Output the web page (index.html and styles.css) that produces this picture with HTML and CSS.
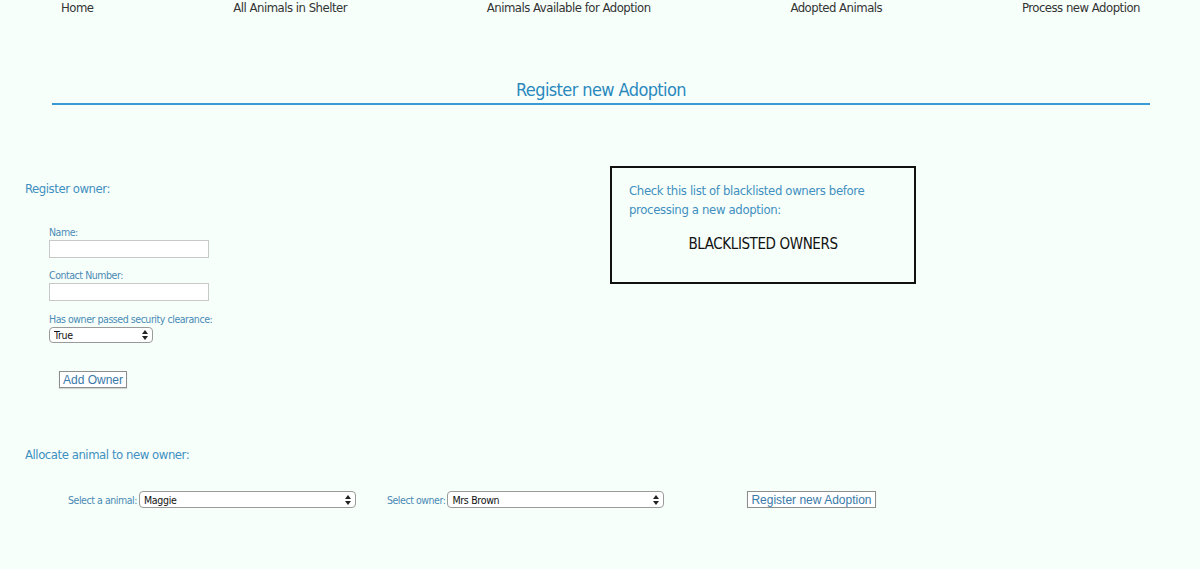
FILE: index.html
```html
<!DOCTYPE html>
<html lang="en">
<head>
<meta charset="utf-8">
<title>Register new Adoption</title>
<link rel="stylesheet" href="styles.css">
</head>
<body>
<nav class="nav">
  <a href="#">Home</a>
  <a href="#">All Animals in Shelter</a>
  <a href="#">Animals Available for Adoption</a>
  <a href="#">Adopted Animals</a>
  <a href="#">Process new Adoption</a>
</nav>
<header class="title">
  <h1>Register new Adoption</h1>
</header>
<main class="top">
  <section class="owner">
    <h2>Register owner:</h2>
    <form class="owner-form">
      <label class="field">
        <span>Name:</span>
        <input type="text" class="text-in">
      </label>
      <label class="field">
        <span>Contact Number:</span>
        <input type="text" class="text-in">
      </label>
      <label class="field field-last">
        <span>Has owner passed security clearance:</span>
        <span class="sel sel-small">
          <select><option>True</option><option>False</option></select>
          <svg class="arrows" width="6" height="10" viewBox="0 0 6 10"><path d="M3 0L6 4H0z M3 10L0 6H6z" fill="#222"/></svg>
        </span>
      </label>
      <button type="button" class="btn add-btn">Add Owner</button>
    </form>
  </section>
  <aside class="blacklist">
    <p>Check this list of blacklisted owners before processing a new adoption:</p>
    <h3>BLACKLISTED OWNERS</h3>
  </aside>
</main>
<section class="allocate">
  <h2>Allocate animal to new owner:</h2>
  <div class="alloc-row">
    <label class="inline">Select a animal:
      <span class="sel sel-wide">
        <select><option>Maggie</option></select>
        <svg class="arrows" width="6" height="10" viewBox="0 0 6 10"><path d="M3 0L6 4H0z M3 10L0 6H6z" fill="#222"/></svg>
      </span>
    </label>
    <label class="inline">Select owner:
      <span class="sel sel-wide">
        <select><option>Mrs Brown</option></select>
        <svg class="arrows" width="6" height="10" viewBox="0 0 6 10"><path d="M3 0L6 4H0z M3 10L0 6H6z" fill="#222"/></svg>
      </span>
    </label>
    <button type="button" class="btn reg-btn">Register new Adoption</button>
  </div>
</section>
</body>
</html>
```
FILE: styles.css
```css
* { box-sizing: border-box; }
body {
  margin: 0;
  background: #f7fffb;
  font-family: "Liberation Sans Narrow", "DejaVu Sans Condensed", "Liberation Sans", sans-serif;
  color: #333;
}
.nav {
  display: flex;
  justify-content: space-between;
  padding: 0 60px 0 61px;
  height: 16px;
  line-height: 15px;
  font-size: 13px;
  letter-spacing: -0.5px;
}
.nav a { color: #333; text-decoration: none; }

.title {
  margin: 0 50px 0 52px;
  padding-top: 62px;
  border-bottom: 2px solid #3a9ad6;
  text-align: center;
}
.title h1 {
  margin: 0;
  font-size: 18px;
  letter-spacing: -0.6px;
  line-height: 24px;
  padding-bottom: 1px;
  font-weight: normal;
  color: #2a88bd;
}

.top {
  display: flex;
  margin-top: 61px;
}
.owner {
  width: 610px;
  padding: 15px 0 0 25px;
}
h2 {
  margin: 0;
  font-size: 13px;
  letter-spacing: -0.45px;
  line-height: 16px;
  font-weight: normal;
  color: #3f8fc0;
}
.owner-form {
  padding: 29px 0 0 24px;
  display: flex;
  flex-direction: column;
  align-items: flex-start;
}
.field {
  display: flex;
  flex-direction: column;
  font-size: 10.5px;
  letter-spacing: -0.45px;
  line-height: 13px;
  color: #4a8ab4;
  margin-bottom: 11px;
}
.field-last { margin-top: 1px; margin-bottom: 0; }
.field span:first-child { margin-bottom: 1px; }
.text-in {
  width: 160px;
  height: 18px;
  border: 1px solid #c8c8c8;
  background: #fff;
  margin: 0;
}
.sel {
  position: relative;
  display: inline-block;
  letter-spacing: 0;
}
.sel select {
  appearance: none;
  -webkit-appearance: none;
  width: 100%;
  height: 16px;
  margin: 0;
  padding: 0 0 0 4px;
  border: 1px solid #9a9a9a;
  border-radius: 4px;
  background: #fff;
  font-family: "Liberation Sans Narrow", "DejaVu Sans Condensed", sans-serif;
  font-size: 10.5px;
  letter-spacing: -0.3px;
  line-height: 14px;
  color: #111;
}
.sel .arrows {
  position: absolute;
  right: 5px;
  top: 3px;
  pointer-events: none;
}
.sel-small { width: 104px; }
.sel-wide { width: 217px; height: 17px; }
.sel-wide select { height: 17px; }
.sel-wide .arrows { top: 4px; }

.btn {
  background: #fff;
  border: 1px solid #8d8d8d;
  box-shadow: 0 1px 1px rgba(0,0,0,0.15);
  color: #3a79a8;
  font-family: "Liberation Sans", Arial, sans-serif;
  font-size: 12px;
  line-height: 14px;
  padding: 0 3px;
  height: 17px;
  margin: 0;
}
.add-btn { margin: 28px 0 0 10px; }

.blacklist {
  width: 306px;
  height: 118px;
  border: 2px solid #111;
  padding: 13px 17px 0 17px;
}
.blacklist p {
  margin: 0;
  font-size: 13px;
  letter-spacing: -0.35px;
  line-height: 19px;
  color: #3f8fc0;
}
.blacklist h3 {
  margin: 16px 0 0 0;
  text-align: center;
  font-size: 15px;
  letter-spacing: -0.4px;
  line-height: 18px;
  font-weight: normal;
  color: #111;
}

.allocate {
  padding: 59px 0 0 25px;
}
.alloc-row {
  display: flex;
  align-items: center;
  padding: 28px 0 0 43px;
}
.inline {
  display: flex;
  align-items: center;
  gap: 2px;
  font-size: 10.5px;
  letter-spacing: -0.45px;
  color: #4a8ab4;
}
.inline + .inline { margin-left: 31px; }
.reg-btn { margin-left: 83px; }
```
